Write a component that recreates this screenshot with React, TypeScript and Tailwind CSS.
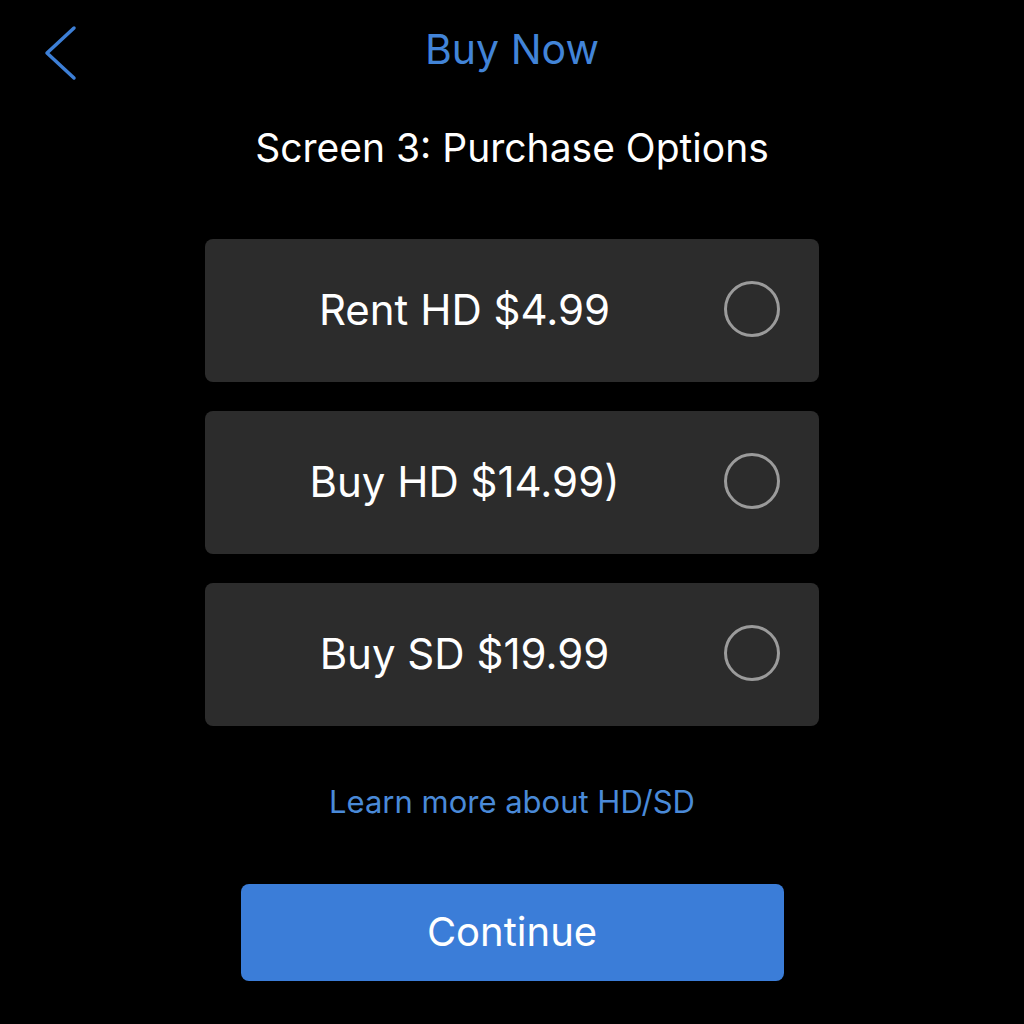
import React, { useState } from "react";

const options = [
  { id: "rent-hd", label: "Rent HD $4.99" },
  { id: "buy-hd", label: "Buy HD $14.99)" },
  { id: "buy-sd", label: "Buy SD $19.99" },
];

export default function App() {
  const [selected, setSelected] = useState<string | null>(null);

  return (
    <div
      className="w-[1024px] h-[1024px] bg-black flex flex-col items-center"
      style={{ fontFamily: "Inter, 'Noto Sans', sans-serif" }}
    >
      {/* Header */}
      <div className="relative w-full h-[100px] flex items-center justify-center">
        <button className="absolute left-[40px] top-[24px] w-[40px] h-[58px] flex items-center justify-center">
          <svg width="36" height="56" viewBox="0 0 36 56" fill="none">
            <path
              d="M32 3 L5 28 L32 53"
              stroke="#3d7fd6"
              strokeWidth="3.5"
              strokeLinecap="round"
              strokeLinejoin="round"
            />
          </svg>
        </button>
        <h1 className="text-[41px] text-[#4284d8] font-normal">Buy Now</h1>
      </div>

      {/* Title */}
      <h2 className="mt-[19px] text-[39px] leading-[58px] text-white font-normal">
        Screen 3: Purchase Options
      </h2>

      {/* Options */}
      <div className="mt-[62px] w-[614px] flex flex-col gap-[29px]">
        {options.map((o) => (
          <button
            key={o.id}
            onClick={() => setSelected(o.id)}
            className="h-[143px] rounded-[8px] bg-[#2c2c2c] flex items-center pr-[39px]"
          >
            <span className="flex-1 text-center text-white text-[42px] -mt-[3px]">
              {o.label}
            </span>
            <span className="w-[56px] h-[56px] -mt-[3px] rounded-full border-[3px] border-[#9b9b9b] flex items-center justify-center">
              {selected === o.id && (
                <span className="w-[34px] h-[34px] rounded-full bg-[#3d7fd6]" />
              )}
            </span>
          </button>
        ))}
      </div>

      {/* Learn more */}
      <a className="mt-[53px] text-[31px] text-[#4a8ad8] cursor-pointer">
        Learn more about HD/SD
      </a>

      {/* Continue */}
      <button className="mt-[58px] w-[543px] h-[97px] rounded-[8px] bg-[#3b7dd8] text-white text-[40px]">
        Continue
      </button>
    </div>
  );
}
